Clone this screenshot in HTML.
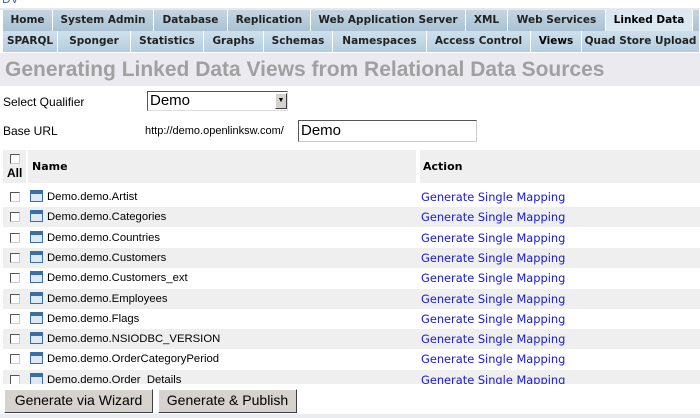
<!DOCTYPE html>
<html><head><style>
*{margin:0;padding:0;box-sizing:border-box}
body{width:700px;height:418px;overflow:hidden;background:#fff;font-family:"Liberation Sans",Arial,sans-serif;font-size:12px;position:relative}
.t{position:absolute;height:21px;background:linear-gradient(#c4d6e2,#a9c2d3);border-right:1px solid #fff;font-family:"DejaVu Sans",sans-serif;font-weight:bold;font-size:10.5px;color:#222;text-align:center;line-height:21px;white-space:nowrap;overflow:hidden}
.r2 .t{background:linear-gradient(#cfe0ec,#b3cde0)}
.a{position:absolute}
.row{position:absolute;left:3px;width:697px;height:20px}
.row.g{background:#efefef}
.cb{position:absolute;left:7px;top:5px;width:10px;height:10px;border:1px solid #555;border-right-color:#ccc;border-bottom-color:#ccc;background:#fff}
.ic{position:absolute;left:27px;top:3px;width:13px;height:12px;border:1px solid #3a6ea5;background:linear-gradient(#3a6ea5 0 3px,#dfe9f5 3px);}
.nm{position:absolute;left:44px;top:4px;font-size:11.3px;color:#000}
.lk{position:absolute;left:418px;top:3px;font-family:"DejaVu Sans",sans-serif;font-size:11.4px;color:#1a1acc}
.btn{position:absolute;top:389px;height:24px;background:#d6d3ce;border:1px solid;border-color:#fff #404040 #404040 #fff;font-size:14px;line-height:21px;text-align:center}
</style></head><body>
<div class="a" style="left:2px;top:-8px;color:#3a6ea5;font-size:12px">DV</div>
<div class="a" style="left:0;top:8px;width:700px;height:2px;background:#e8e8ec"></div>
<div>
<div class="t" style="left:3px;top:10px;width:50px">Home</div>
<div class="t" style="left:53px;top:10px;width:101px">System Admin</div>
<div class="t" style="left:154px;top:10px;width:74px">Database</div>
<div class="t" style="left:228px;top:10px;width:83px">Replication</div>
<div class="t" style="left:311px;top:10px;width:155px">Web Application Server</div>
<div class="t" style="left:466px;top:10px;width:42px">XML</div>
<div class="t" style="left:508px;top:10px;width:98px">Web Services</div>
<div class="t" style="left:606px;top:10px;width:87px;background:#dbe8f1;color:#000">Linked Data</div>
<div class="t" style="left:693px;top:10px;width:7px"></div>
</div>
<div class="r2">
<div class="t" style="left:3px;top:31px;width:55px">SPARQL</div>
<div class="t" style="left:58px;top:31px;width:73px">Sponger</div>
<div class="t" style="left:131px;top:31px;width:73px">Statistics</div>
<div class="t" style="left:204px;top:31px;width:60px">Graphs</div>
<div class="t" style="left:264px;top:31px;width:69px">Schemas</div>
<div class="t" style="left:333px;top:31px;width:94px">Namespaces</div>
<div class="t" style="left:427px;top:31px;width:104px">Access Control</div>
<div class="t" style="left:531px;top:31px;width:51px;color:#000">Views</div>
<div class="t" style="left:582px;top:31px;width:118px">Quad Store Upload</div>
</div>
<div class="a" style="left:0;top:53px;width:700px;height:33px;background:#ebebef"></div>
<div class="a" style="left:5px;top:58px;font-size:21px;font-weight:bold;color:#a0a0a0;white-space:nowrap">Generating Linked Data Views from Relational Data Sources</div>
<div class="a" style="left:3px;top:95px">Select Qualifier</div>
<div class="a" style="left:147px;top:91px;width:141px;height:20px;border:1px solid;border-color:#555 #ddd #ddd #555;background:#fff;font-size:15px;padding-left:2px;line-height:17px">Demo</div>
<div class="a" style="left:275px;top:93px;width:12px;height:16px;background:#d6d3ce;border:1px solid;border-color:#fff #404040 #404040 #fff;font-size:7px;text-align:center;line-height:14px">▼</div>
<div class="a" style="left:3px;top:124px">Base URL</div>
<div class="a" style="left:145px;top:125px;font-size:11px">http://demo.openlinksw.com/</div>
<div class="a" style="left:298px;top:120px;width:179px;height:22px;border:1px solid;border-color:#555 #ccc #ccc #555;font-size:15px;padding-left:2px;line-height:19px">Demo</div>
<div class="a" style="left:3px;top:150px;width:23px;height:33px;background:#efefef"></div>
<div class="a" style="left:28px;top:150px;width:388px;height:33px;background:#efefef"></div>
<div class="a" style="left:420px;top:150px;width:280px;height:33px;background:#efefef"></div>
<div class="cb" style="left:10px;top:154px"></div>
<div class="a" style="left:7px;top:166px;font-weight:bold">All</div>
<div class="a" style="left:32px;top:160px;font-weight:bold;font-family:'DejaVu Sans',sans-serif;font-size:11px">Name</div>
<div class="a" style="left:423px;top:160px;font-weight:bold;font-family:'DejaVu Sans',sans-serif;font-size:11px">Action</div>
<div class="a" style="left:0;top:187px;width:700px;height:197px;overflow:hidden">
<div class="row" style="top:0"><div class="cb"></div><div class="ic"></div><div class="nm">Demo.demo.Artist</div><div class="lk">Generate Single Mapping</div></div>
<div class="row g" style="top:20.3px"><div class="cb"></div><div class="ic"></div><div class="nm">Demo.demo.Categories</div><div class="lk">Generate Single Mapping</div></div>
<div class="row" style="top:40.6px"><div class="cb"></div><div class="ic"></div><div class="nm">Demo.demo.Countries</div><div class="lk">Generate Single Mapping</div></div>
<div class="row g" style="top:60.9px"><div class="cb"></div><div class="ic"></div><div class="nm">Demo.demo.Customers</div><div class="lk">Generate Single Mapping</div></div>
<div class="row" style="top:81.2px"><div class="cb"></div><div class="ic"></div><div class="nm">Demo.demo.Customers_ext</div><div class="lk">Generate Single Mapping</div></div>
<div class="row g" style="top:101.5px"><div class="cb"></div><div class="ic"></div><div class="nm">Demo.demo.Employees</div><div class="lk">Generate Single Mapping</div></div>
<div class="row" style="top:121.8px"><div class="cb"></div><div class="ic"></div><div class="nm">Demo.demo.Flags</div><div class="lk">Generate Single Mapping</div></div>
<div class="row g" style="top:142.1px"><div class="cb"></div><div class="ic"></div><div class="nm">Demo.demo.NSIODBC_VERSION</div><div class="lk">Generate Single Mapping</div></div>
<div class="row" style="top:162.4px"><div class="cb"></div><div class="ic"></div><div class="nm">Demo.demo.OrderCategoryPeriod</div><div class="lk">Generate Single Mapping</div></div>
<div class="row g" style="top:182.7px"><div class="cb"></div><div class="ic"></div><div class="nm">Demo.demo.Order_Details</div><div class="lk">Generate Single Mapping</div></div>
</div>
<div class="btn" style="left:4px;width:149px">Generate via Wizard</div>
<div class="btn" style="left:158px;width:139px">Generate &amp; Publish</div>
<div class="a" style="left:0;top:414px;width:700px;height:4px;background:#ebebf2"></div>
</body></html>
